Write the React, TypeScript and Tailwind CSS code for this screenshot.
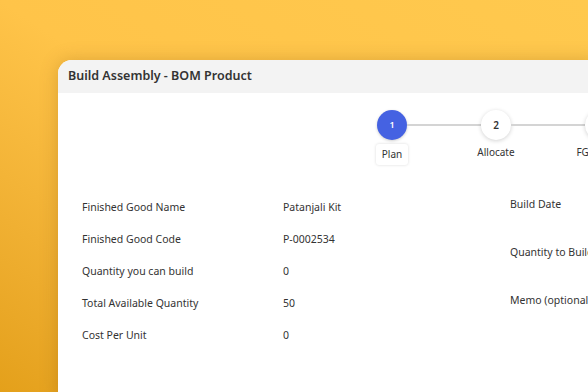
const LEFT_ROWS = [
  { label: "Finished Good Name", value: "Patanjali Kit" },
  { label: "Finished Good Code", value: "P-0002534" },
  { label: "Quantity you can build", value: "0" },
  { label: "Total Available Quantity", value: "50" },
  { label: "Cost Per Unit", value: "0" },
];

const RIGHT_ROWS = ["Build Date", "Quantity to Build", "Memo (optional)"];

function Stepper() {
  return (
    <div className="ml-[319px] flex flex-col">
      {/* circles + connectors */}
      <div className="flex h-[30px] items-center">
        <div className="grid h-[30px] w-[30px] shrink-0 place-items-center rounded-full bg-[#4562e2] text-[9px] font-semibold text-white shadow-[0_1px_3px_rgba(0,0,0,0.2)]">
          1
        </div>
        <div className="h-[2px] w-[74px] shrink-0 bg-[#d4d4d4]" />
        <div className="grid h-[30px] w-[30px] shrink-0 place-items-center rounded-full bg-white text-[10px] font-semibold text-[#333] shadow-[0_1px_4px_rgba(0,0,0,0.18)]">
          2
        </div>
        <div className="h-[2px] w-[74px] shrink-0 bg-[#d4d4d4]" />
        <div className="grid h-[30px] w-[30px] shrink-0 place-items-center rounded-full bg-white text-[10px] font-semibold text-[#333] shadow-[0_1px_4px_rgba(0,0,0,0.18)]">
          3
        </div>
      </div>
      {/* labels */}
      <div className="-ml-[37px] mt-[4px] flex text-[10px] text-[#333]">
        <div className="flex w-[104px] shrink-0 justify-center">
          <span className="rounded-[3px] bg-white px-[6px] py-[3px] shadow-[0_0_3px_rgba(0,0,0,0.15)]">Plan</span>
        </div>
        <div className="flex w-[104px] shrink-0 justify-center pt-[1px]">Allocate</div>
        <div className="flex w-[104px] shrink-0 justify-center pt-[1px]">FG Details</div>
      </div>
    </div>
  );
}

export default function App() {
  return (
    <div
      className="h-[392px] w-[588px] overflow-hidden bg-linear-to-bl from-[#ffc94e] via-[#ffc449] to-[#e4a01a] pl-[58px] pt-[60px]"
      style={{ fontFamily: '"Noto Sans", "Open Sans", sans-serif' }}
    >
      <div className="flex h-[340px] w-[540px] flex-col overflow-hidden rounded-tl-[14px] bg-white shadow-[0_0_18px_rgba(120,70,0,0.25)]">
        <div className="flex h-[33px] shrink-0 items-center bg-[#f3f3f3] px-[10px] text-[12.5px] font-semibold text-[#333]">
          Build Assembly - BOM Product
        </div>

        <div className="pt-[17px]">
          <Stepper />

          <div className="mt-[16px] flex">
            <div className="w-[428px] shrink-0 pt-[11px] pl-[24px]">
              {LEFT_ROWS.map((r) => (
                <div key={r.label} className="flex h-[32px] items-center text-[10.5px] text-[#333]">
                  <span className="w-[201px]">{r.label}</span>
                  <span>{r.value}</span>
                </div>
              ))}
            </div>
            <div className="pl-[24px]">
              {RIGHT_ROWS.map((l) => (
                <div key={l} className="flex h-[48px] items-center whitespace-nowrap text-[10.5px] text-[#333]">
                  {l}
                </div>
              ))}
            </div>
          </div>
        </div>
      </div>
    </div>
  );
}
